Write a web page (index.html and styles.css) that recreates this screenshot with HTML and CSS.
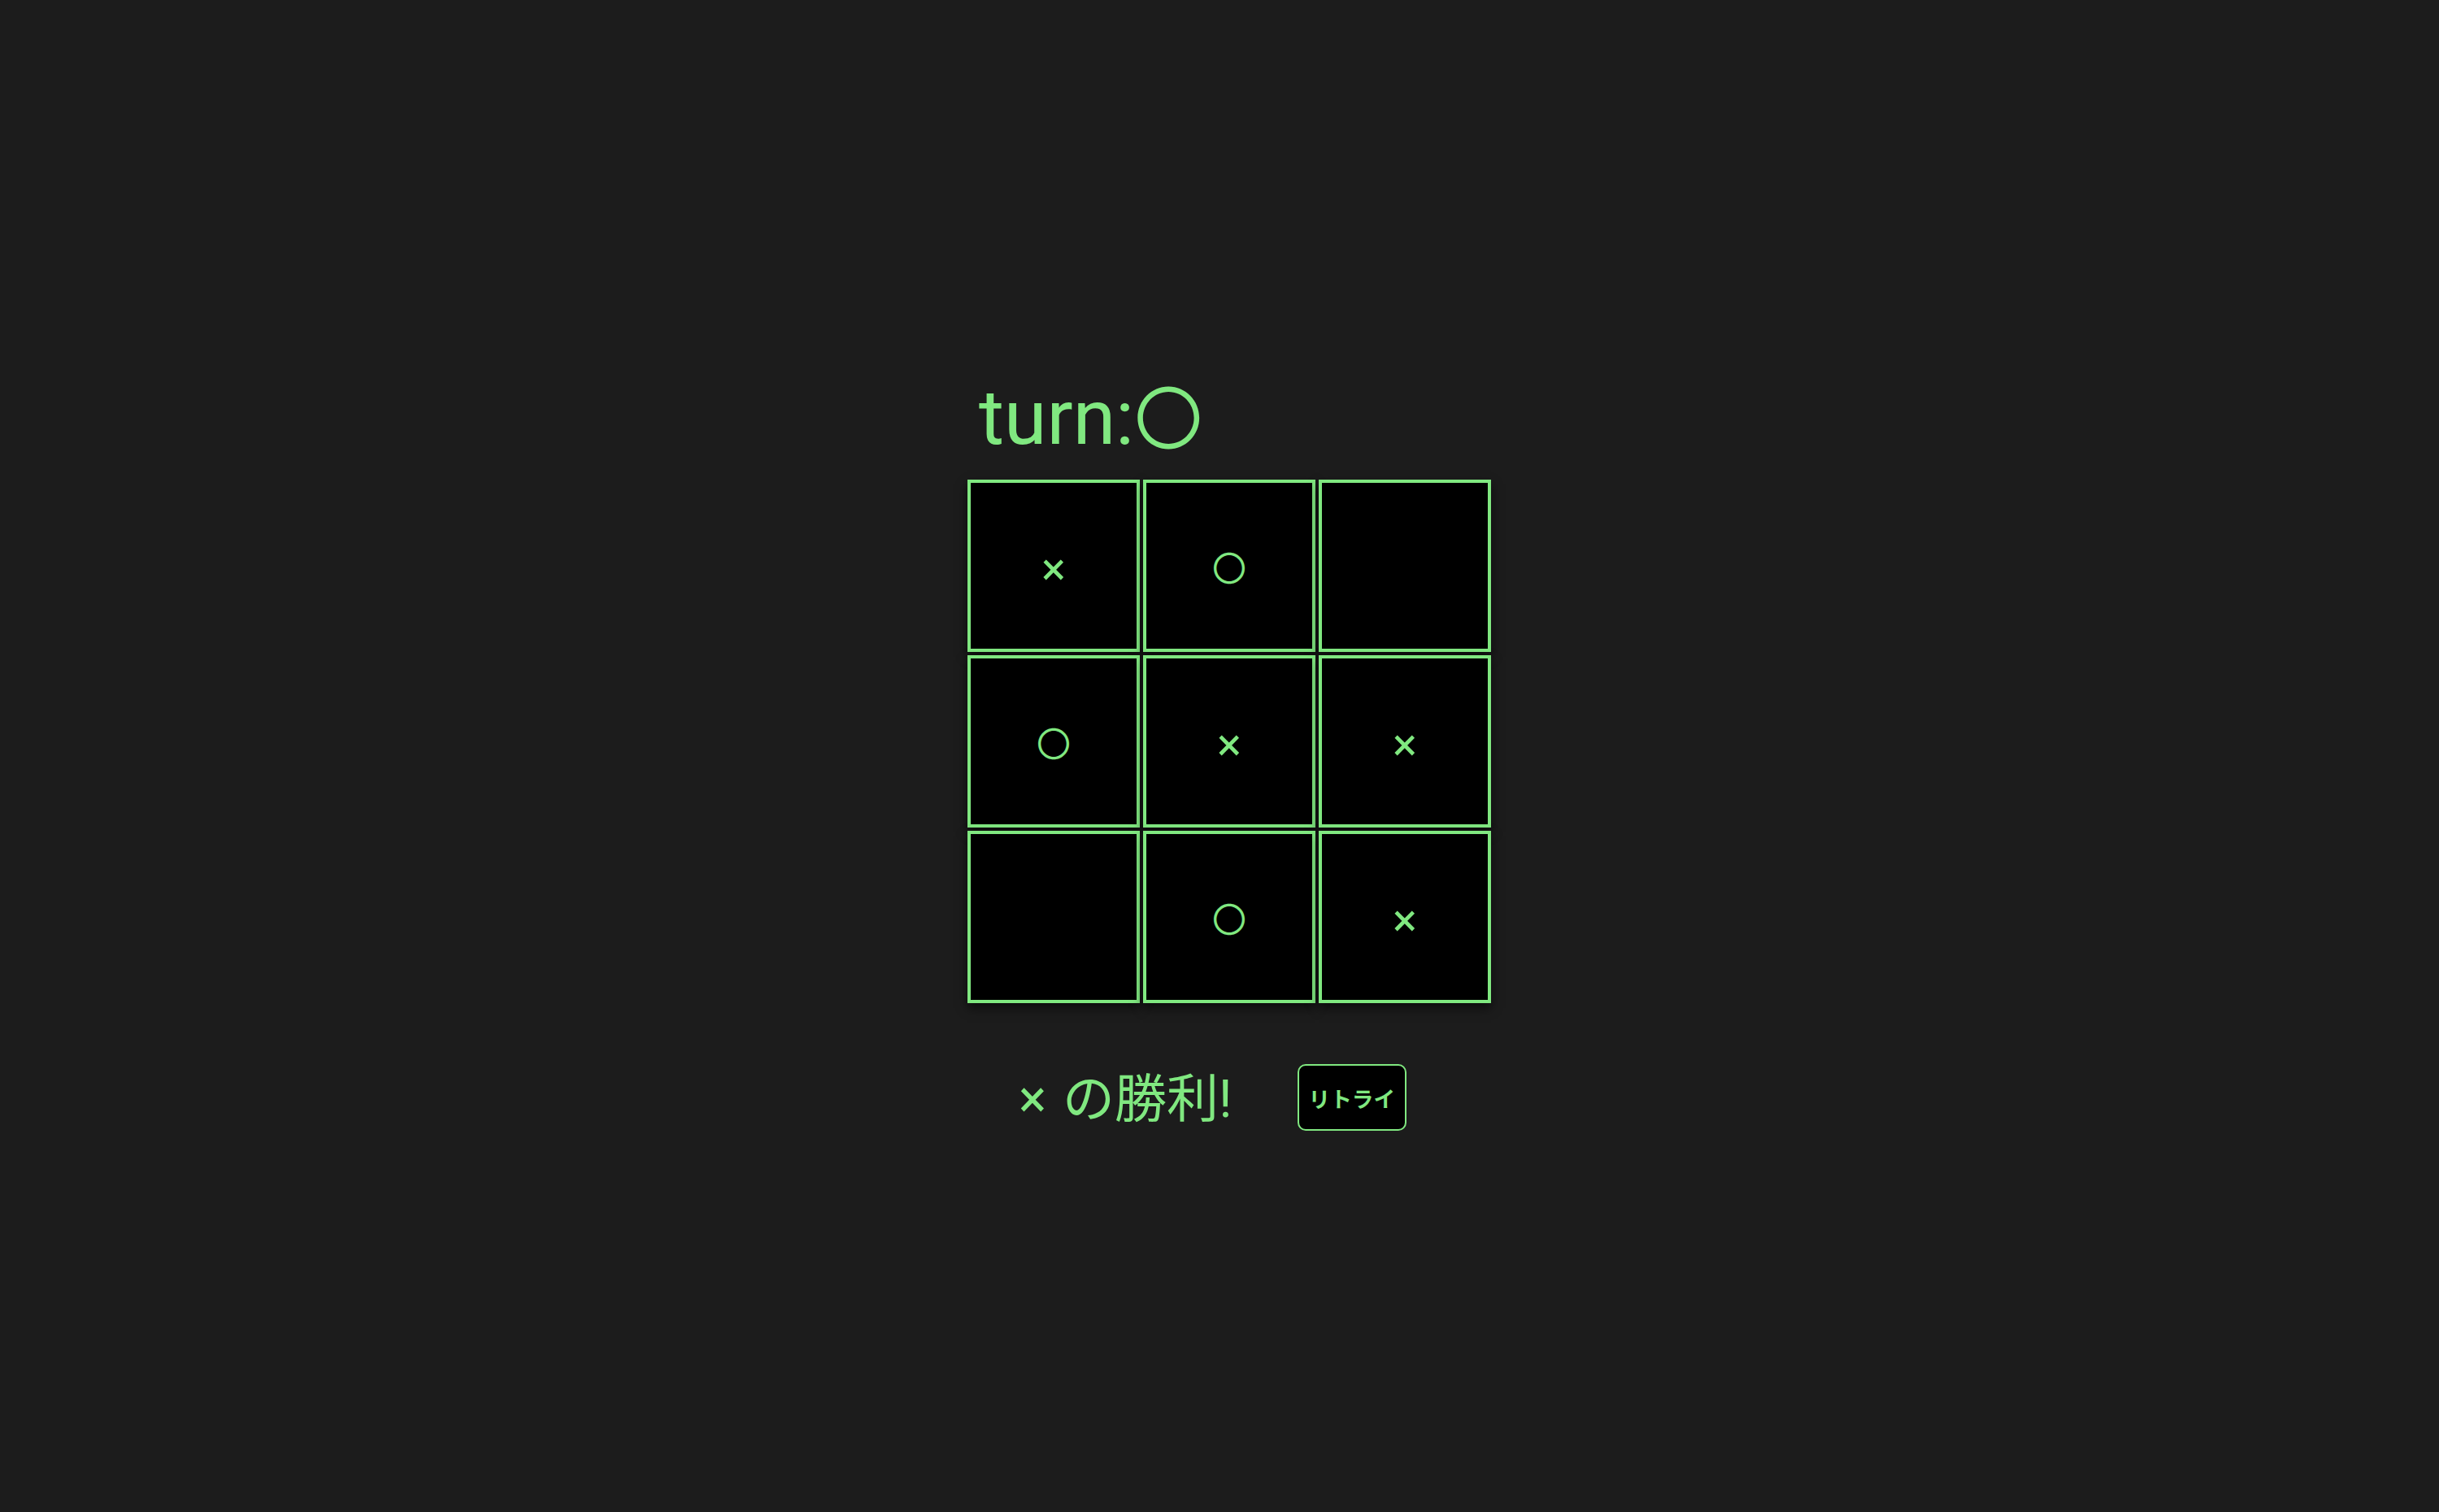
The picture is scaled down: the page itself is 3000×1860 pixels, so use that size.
FILE: index.html
```html
<!DOCTYPE html>
<html lang="ja">
<head>
<meta charset="utf-8">
<title>まるばつゲーム</title>
<link rel="stylesheet" href="styles.css">
</head>
<body>
<main class="game">
  <h1 class="turn">turn:<span class="turn-mark">〇</span></h1>
  <div class="board">
    <div class="row">
      <button class="cell cell-x">×</button>
      <button class="cell cell-o">〇</button>
      <button class="cell"></button>
    </div>
    <div class="row">
      <button class="cell cell-o">〇</button>
      <button class="cell cell-x">×</button>
      <button class="cell cell-x">×</button>
    </div>
    <div class="row">
      <button class="cell"></button>
      <button class="cell cell-o">〇</button>
      <button class="cell cell-x">×</button>
    </div>
  </div>
  <div class="result">
    <span class="message">× の勝利!</span>
    <button class="retry">リトライ</button>
  </div>
</main>
</body>
</html>
```

FILE: styles.css
```css
html, body {
  margin: 0;
  padding: 0;
}

body {
  background: #1c1c1c;
  color: #80e880;
  font-family: Roboto, "Noto Sans CJK JP", sans-serif;
  min-height: 1860px;
  display: flex;
  justify-content: center;
  align-items: flex-start;
}

.game {
  margin-left: 24px;
  padding-top: 466px;
  width: 644px;
  display: flex;
  flex-direction: column;
}

.turn {
  margin: 0 0 29px 0;
  padding-left: 14px;
  font-size: 95px;
  font-weight: 400;
  line-height: 1;
}

.turn-mark {
  font-family: "Noto Sans CJK JP", sans-serif;
  font-size: 84px;
}

.board {
  display: flex;
  flex-direction: column;
  gap: 4px;
}

.row {
  display: flex;
  gap: 4px;
}

.cell {
  width: 212px;
  height: 212px;
  box-sizing: border-box;
  border: 4px solid #80e880;
  background: #000;
  color: #80e880;
  font-family: Roboto, "Noto Sans CJK JP", sans-serif;
  padding: 0;
  margin: 0;
  display: flex;
  align-items: center;
  justify-content: center;
  box-shadow: 0 6px 12px rgba(0, 0, 0, 0.6);
}

.cell-x {
  font-size: 56px;
  padding-top: 8px;
}

.cell-o {
  font-family: "Noto Sans CJK JP", sans-serif;
  font-size: 42px;
}

.result {
  margin-top: 66px;
  padding-left: 63px;
  display: flex;
  align-items: center;
  gap: 80px;
}

.message {
  font-size: 64px;
  line-height: normal;
  word-spacing: 4px;
}

.retry {
  font-family: "Noto Sans CJK JP", sans-serif;
  font-size: 26.67px;
  font-weight: 700;
  line-height: normal;
  color: #80e880;
  background: #000;
  border: 2px solid #80e880;
  border-radius: 10px;
  padding: 19.5px 12px;
  margin: 8px 0 0 0;
}
```
